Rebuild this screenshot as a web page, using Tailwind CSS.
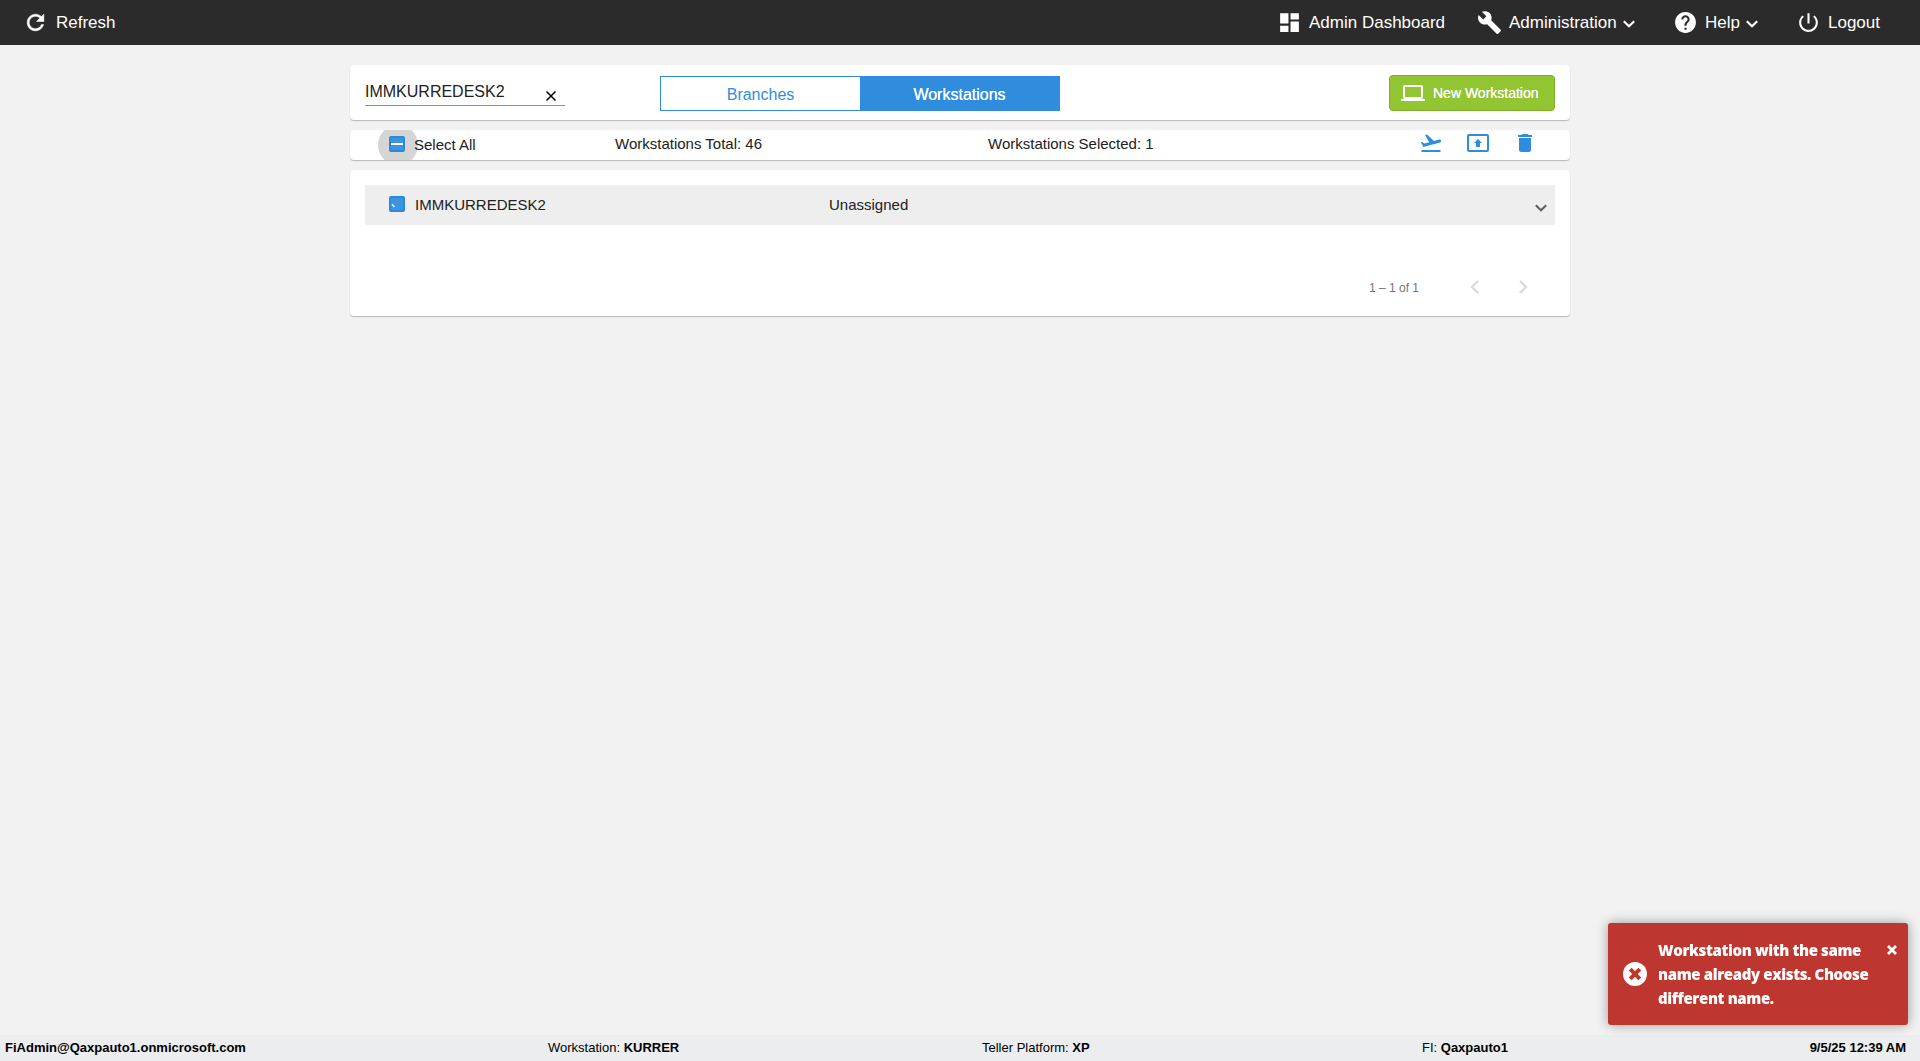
<!DOCTYPE html>
<html lang="en">

<head>
    <meta charset="UTF-8">
    <meta name="viewport" content="width=device-width, initial-scale=1.0">
    <title>Workstations</title>
    <script src="https://cdn.jsdelivr.net/npm/@tailwindcss/browser@4"></script>
</head>

<body class="h-screen flex flex-col overflow-hidden bg-[#f2f2f2] font-['Liberation_Sans',Arial,sans-serif] text-[15px] text-[#212121]">

    <!-- Top bar -->
    <header class="h-[45px] shrink-0 bg-[#2b2b2b] text-white text-[17px] flex items-center justify-between pl-[23px] pr-10">
        <a class="flex items-center gap-2">
            <svg class="size-[25px]" viewBox="0 0 24 24" fill="currentColor" stroke="currentColor" stroke-width=".5"><path d="M17.65 6.35C16.2 4.9 14.21 4 12 4c-4.42 0-7.99 3.58-7.99 8s3.57 8 7.99 8c3.73 0 6.84-2.55 7.73-6h-2.08c-.82 2.33-3.04 4-5.65 4-3.31 0-6-2.69-6-6s2.69-6 6-6c1.66 0 3.14.69 4.22 1.78L13 11h7V4l-2.35 2.35z"/></svg>
            <span class="pt-px">Refresh</span>
        </a>
        <nav class="flex items-center">
            <a class="flex items-center gap-[7px] w-[200px]">
                <svg class="size-[25px]" viewBox="0 0 24 24" fill="currentColor"><path d="M3 13h8V3H3v10zm0 8h8v-6H3v6zm10 0h8V11h-8v10zm0-18v6h8V3h-8z"/></svg>
                <span class="pt-px">Admin Dashboard</span>
            </a>
            <a class="flex items-center gap-[7px] w-[196px]">
                <svg class="size-[25px]" viewBox="0 0 24 24" fill="currentColor"><path d="M22.7 19l-9.1-9.1c.9-2.3.4-5-1.5-6.9-2-2-5-2.4-7.4-1.3L9 6 6 9 1.6 4.7C.4 7.1.9 10.1 2.9 12.1c1.9 1.9 4.6 2.4 6.9 1.5l9.1 9.1c.4.4 1 .4 1.4 0l2.3-2.3c.5-.4.5-1.1.1-1.4z"/></svg>
                <span class="pt-px">Administration</span>
                <svg class="-ml-px mt-[2px] w-3 h-2" viewBox="0 0 12 8" fill="none" stroke="currentColor" stroke-width="2.2"><path d="M.8 1.2L6 6.3l5.2-5.1"/></svg>
            </a>
            <a class="flex items-center gap-[7px] w-[123px]">
                <svg class="size-[25px]" viewBox="0 0 24 24" fill="currentColor"><path d="M12 2C6.48 2 2 6.48 2 12s4.48 10 10 10 10-4.48 10-10S17.52 2 12 2zm1 17h-2v-2h2v2zm2.07-7.75l-.9.92C13.45 12.9 13 13.5 13 15h-2v-.5c0-1.1.45-2.1 1.17-2.83l1.24-1.26c.37-.36.59-.86.59-1.41 0-1.1-.9-2-2-2s-2 .9-2 2H8c0-2.21 1.79-4 4-4s4 1.79 4 4c0 .88-.36 1.68-.93 2.25z"/></svg>
                <span class="pt-px">Help</span>
                <svg class="-ml-px mt-[2px] w-3 h-2" viewBox="0 0 12 8" fill="none" stroke="currentColor" stroke-width="2.2"><path d="M.8 1.2L6 6.3l5.2-5.1"/></svg>
            </a>
            <a class="flex items-center gap-[7px]">
                <svg class="size-[25px]" viewBox="0 0 24 24" fill="currentColor"><path d="M13 3h-2v10h2V3zm4.83 2.17l-1.42 1.42C17.99 7.86 19 9.81 19 12c0 3.87-3.13 7-7 7s-7-3.13-7-7c0-2.19 1.01-4.14 2.58-5.42L6.17 5.17C4.23 6.82 3 9.26 3 12c0 4.97 4.03 9 9 9s9-4.03 9-9c0-2.74-1.23-5.18-3.17-6.83z"/></svg>
                <span class="pt-px">Logout</span>
            </a>
        </nav>
    </header>

    <main class="flex-1 w-[1220px] mx-auto pt-5 flex flex-col gap-2.5">

        <!-- Search, tabs, new button -->
        <section class="h-[55px] bg-white rounded shadow-[0_1px_1px_rgba(0,0,0,0.25)] flex items-start px-[15px]">
            <div class="w-[200px] h-[41px] border-b border-[#8c8c8c] flex items-center justify-between pr-[9px] pt-3">
                <span class="text-base pt-[2px]">IMMKURREDESK2</span>
                <svg class="size-[10px] mt-[9px] text-black" viewBox="0 0 10 10" fill="none" stroke="currentColor" stroke-width="1.5"><path d="M.5.5l9 9M9.5.5l-9 9"/></svg>
            </div>
            <div class="ml-[95px] mt-[11px] w-[400px] h-[35px] flex border border-[#308ddd] bg-[#308ddd] text-base text-center leading-[35px]">
                <div class="w-[199px] h-[33px] bg-white text-[#308ddd]">Branches</div>
                <div class="flex-1 text-white [text-shadow:0_0_0.5px_white]">Workstations</div>
            </div>
            <button class="ml-auto mt-[10px] w-[166px] h-9 rounded bg-[#92c532] border border-[#7cb02a] text-white text-[14px] [text-shadow:0_0_0.5px_white] flex items-center pl-[11px]">
                <svg class="size-6" viewBox="0 0 24 24" fill="currentColor"><path d="M20 18c1.1 0 1.99-.9 1.99-2L22 6c0-1.1-.9-2-2-2H4c-1.1 0-2 .9-2 2v10c0 1.1.9 2 2 2H0v2h24v-2h-4zM4 6h16v10H4V6z"/></svg>
                <span class="ml-2">New Workstation</span>
            </button>
        </section>

        <!-- Selection summary -->
        <section class="relative h-[30px] bg-white rounded shadow-[0_1px_1px_rgba(0,0,0,0.25)] flex items-center">
            <div class="absolute left-7 top-0 w-10 h-[30px] overflow-hidden">
                <div class="-mt-[5px] size-10 rounded-full bg-[#d5d5d5]"></div>
            </div>
            <div class="relative ml-[39px] mb-[2px] size-4 rounded-xs bg-[#3c95df] border-2 border-[#2d88d9] flex items-center justify-center">
                <div class="w-3 h-[2px] shrink-0 bg-white"></div>
            </div>
            <span class="relative ml-[9px] w-[201px]">Select All</span>
            <span class="w-[373px] pb-[2px]">Workstations Total: 46</span>
            <span class="pb-[2px]">Workstations Selected: 1</span>
            <div class="ml-auto mr-[33px] mb-[5px] flex items-center gap-[23px] text-[#308ddd]">
                <svg class="size-6" viewBox="0 0 24 24" fill="currentColor"><path d="M2.5 19h19v2h-19zm19.57-9.36c-.21-.8-1.04-1.28-1.84-1.06L14.92 10l-6.9-6.43-1.93.51 4.14 7.17-4.97 1.33-1.97-1.54-1.45.39 1.82 3.16.77 1.33 1.6-.43 5.31-1.42 4.35-1.16L21 11.49c.81-.23 1.28-1.05 1.07-1.85z"/></svg>
                <svg class="size-6" viewBox="0 0 24 24" fill="currentColor"><path d="M21 3H3c-1.11 0-2 .89-2 2v14c0 1.11.89 2 2 2h18c1.11 0 2-.89 2-2V5c0-1.11-.89-2-2-2zm0 16.02H3V4.98h18v14.04zM10 12H8l4-4 4 4h-2v4h-4v-4z"/></svg>
                <svg class="size-6" viewBox="0 0 24 24" fill="currentColor"><path d="M6 19c0 1.1.9 2 2 2h8c1.1 0 2-.9 2-2V7H6v12zM19 4h-3.5l-1-1h-5l-1 1H5v2h14V4z"/></svg>
            </div>
        </section>

        <!-- Workstation list -->
        <section class="h-[146px] bg-white rounded shadow-[0_1px_1px_rgba(0,0,0,0.25)] px-[15px] pt-[15px]">
            <div class="h-10 bg-[#eee] flex items-center">
                <div class="ml-6 mb-[2px] size-4 rounded-xs bg-[#3c95df] border-2 border-[#2d88d9]">
                    <svg class="size-3" viewBox="0 0 12 12" fill="none" stroke="#e3f0fb" stroke-width="1.5"><path d="M1 6.2l2.4 2.8"/></svg>
                </div>
                <span class="ml-[10px] w-[414px] pt-px">IMMKURREDESK2</span>
                <span class="pt-px">Unassigned</span>
                <svg class="ml-auto mr-2 mt-[6px] w-3 h-2 text-[#606060]" viewBox="0 0 12 8" fill="none" stroke="currentColor" stroke-width="2"><path d="M.8 1.2L6 6.3l5.2-5.1"/></svg>
            </div>
            <div class="mt-12 flex items-center justify-end text-[12px] text-[#757575] pr-[18px]">
                <span class="mr-[42px] mt-[2px]">1 – 1 of 1</span>
                <svg class="size-7 text-[#dcdcdc]" viewBox="0 0 24 24" fill="currentColor"><path d="M15.41 7.41L14 6l-6 6 6 6 1.41-1.41L10.83 12z"/></svg>
                <svg class="size-7 ml-5 text-[#dcdcdc]" viewBox="0 0 24 24" fill="currentColor"><path d="M10 6L8.59 7.41 13.17 12l-4.58 4.59L10 18l6-6z"/></svg>
            </div>
        </section>
    </main>

    <!-- Status bar -->
    <footer class="h-[26px] shrink-0 bg-[#ecedef] text-black text-[13px] flex items-center pl-[5px] pr-[14px]">
        <b class="w-[543px]">FiAdmin@Qaxpauto1.onmicrosoft.com</b>
        <span class="w-[434px]">Workstation: <b>KURRER</b></span>
        <span class="w-[440px]">Teller Platform: <b>XP</b></span>
        <span>FI: <b>Qaxpauto1</b></span>
        <b class="ml-auto">9/5/25 12:39 AM</b>
    </footer>

    <!-- Error toast -->
    <div class="fixed right-3 bottom-9 w-[300px] h-[102px] rounded-[3px] bg-[#bd362f] text-white shadow-[0_0_12px_#999] flex items-center pl-[15px]">
        <svg class="size-6 shrink-0" viewBox="0 0 24 24"><circle cx="12" cy="12" r="12" fill="#fff"/><path d="M7.2 7.2l9.6 9.6M16.8 7.2l-9.6 9.6" stroke="#bd362f" stroke-width="4"/></svg>
        <p class="ml-[11px] whitespace-nowrap font-['Open_Sans','Noto_Sans',sans-serif] font-extrabold text-[15px] tracking-[-0.37px] leading-6">Workstation with the same<br>name already exists. Choose<br>different name.</p>
        <svg class="absolute right-[11px] top-[22px] size-[10px]" viewBox="0 0 10 10" fill="none" stroke="currentColor" stroke-width="2.8"><path d="M1 1l8 8M9 1l-8 8"/></svg>
    </div>
</body>

</html>
